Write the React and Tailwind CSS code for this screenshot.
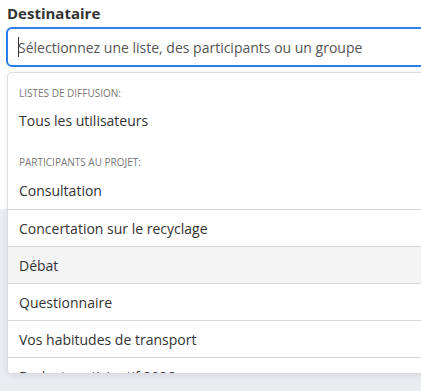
export default function App() {
  const items = [
    "Consultation",
    "Concertation sur le recyclage",
    "Débat",
    "Questionnaire",
    "Vos habitudes de transport",
    "Budget participatif 2026",
  ];
  return (
    <div className="relative w-[421px] h-[391px] overflow-hidden font-['Open_Sans',sans-serif] text-[#333]">
      <div className="h-[209px] bg-white"></div>
      <div className="h-[182px] bg-[#e9edf1]"></div>

      <div className="absolute inset-x-0 top-0 pl-[6px]">
        <div className="pt-[2px] pl-[1px] text-[15px] font-bold leading-[22px] text-[#333]">Destinataire</div>
        <div className="mt-[3px] w-[430px] h-[40px] rounded-[6px] border-2 border-[#2b7de9] flex items-center pl-[10px] bg-white">
          <span className="w-px h-[20px] bg-[#333] mr-[-1px]"></span>
          <span className="text-[14px] text-[#555]">Sélectionnez une liste, des participants ou un groupe</span>
        </div>
        <div className="mt-[5px] ml-[1px] w-[430px] h-[302px] rounded-[5px] border border-[#dcdcdc] bg-white shadow-[0_2px_6px_rgba(0,0,0,0.08)] overflow-hidden">
          <div className="pt-[13px] pl-[11px] text-[10px] uppercase text-[#777] leading-[14px]">Listes de diffusion:</div>
          <div className="h-[40px] flex items-center pl-[11px] text-[14px]">Tous les utilisateurs</div>
          <div className="pt-[15px] pb-[3px] pl-[11px] text-[10px] uppercase text-[#777] leading-[14px]">Participants au projet:</div>
          {items.map((t, i) => (
            <div
              key={t}
              className={
                "h-[37px] flex items-center pl-[11px] text-[14px] " +
                (i > 0 ? "border-t border-[#d6d6d6] " : "") +
                (t === "Débat" ? "bg-[#f4f4f4]" : "bg-white")
              }
            >
              {t}
            </div>
          ))}
        </div>
      </div>
    </div>
  );
}
